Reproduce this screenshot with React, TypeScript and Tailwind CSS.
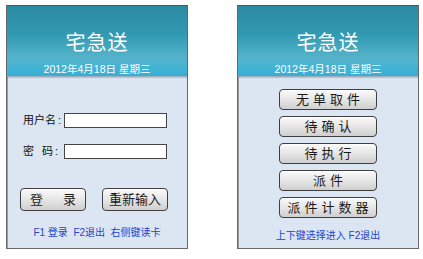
import React from 'react';

const font = { fontFamily: '"Liberation Sans", "Noto Sans CJK SC", sans-serif' };

const Header: React.FC = () => (
    <div className="h-[71px] shrink-0 flex flex-col items-center bg-[linear-gradient(to_bottom,#2b8aa1_0%,#3199b2_40%,#55b4cb_75%,#3fb2d6_92%,#38acd2_100%)] border-b border-[#9fb1bf] shadow-[0_1px_1px_rgba(0,0,0,0.15)]">
        <div className="mt-[25px] text-white text-[20px] leading-[24px] tracking-[1px]">宅急送</div>
        <div className="mt-[7px] text-white text-[10.5px] leading-[14px]">2012年4月18日 星期三</div>
    </div>
);

const Btn: React.FC<{ className?: string; children: React.ReactNode }> = ({ className = '', children }) => (
    <div
        className={`flex items-center justify-center whitespace-nowrap rounded-[4px] border border-[#3f3f3f] bg-[linear-gradient(to_bottom,#fafafa,#e6e6e6_50%,#cfcfcf)] shadow-[inset_0_1px_0_#fff] text-[#1a1a1a] text-[13px] ${className}`}
    >
        {children}
    </div>
);

const Panel: React.FC<{ children: React.ReactNode }> = ({ children }) => (
    <div className="w-[182px] h-[244px] flex flex-col border border-[#6a6a6a] border-t-[#555] bg-[#dce6f2] shadow-[inset_1px_0_0_#999]">
        <Header />
        {children}
    </div>
);

const Field: React.FC<{ label: React.ReactNode; className?: string }> = ({ label, className = '' }) => (
    <div className={`flex items-center h-[15px] ${className}`}>
        <div className="ml-[16px] w-[41px] flex items-center whitespace-nowrap text-[11px] text-[#111] leading-[15px]">
            {label}
            <span className="ml-[2px]">:</span>
        </div>
        <div className="w-[103px] h-[15px] bg-white border border-[#444]" />
    </div>
);

export default function App() {
    return (
        <div className="w-[423px] h-[259px] bg-white flex gap-[49px] pl-[6px] pt-[5px]" style={font}>
            <Panel>
                <div className="flex flex-col">
                    <Field className="mt-[36px]" label={<span>用户名</span>} />
                    <Field
                        className="mt-[16px]"
                        label={
                            <>
                                <span>密</span>
                                <span className="ml-[8px]">码</span>
                            </>
                        }
                    />
                    <div className="mt-[29px] flex">
                        <Btn className="ml-[13px] w-[66px] h-[23px] gap-[20px]">
                            <span>登</span>
                            <span>录</span>
                        </Btn>
                        <Btn className="ml-[16px] w-[66px] h-[23px]">重新输入</Btn>
                    </div>
                    <div className="mt-[15px] text-center text-[10px] text-[#2244cc] leading-[14px] whitespace-pre">
                        F1 登录  F2退出  右侧键读卡
                    </div>
                </div>
            </Panel>
            <Panel>
                <div className="flex flex-col items-center">
                    {['无单取件', '待确认', '待执行', '派件', '派件计数器'].map((t, i) => (
                        <Btn
                            key={t}
                            className={`w-[98px] h-[21px] tracking-[4px] pl-[4px] ${i === 0 ? 'mt-[12px]' : 'mt-[6px]'}`}
                        >
                            {t}
                        </Btn>
                    ))}
                    <div className="mt-[11px] text-[10px] text-[#2244cc] leading-[14px]">上下键选择进入 F2退出</div>
                </div>
            </Panel>
        </div>
    );
}
